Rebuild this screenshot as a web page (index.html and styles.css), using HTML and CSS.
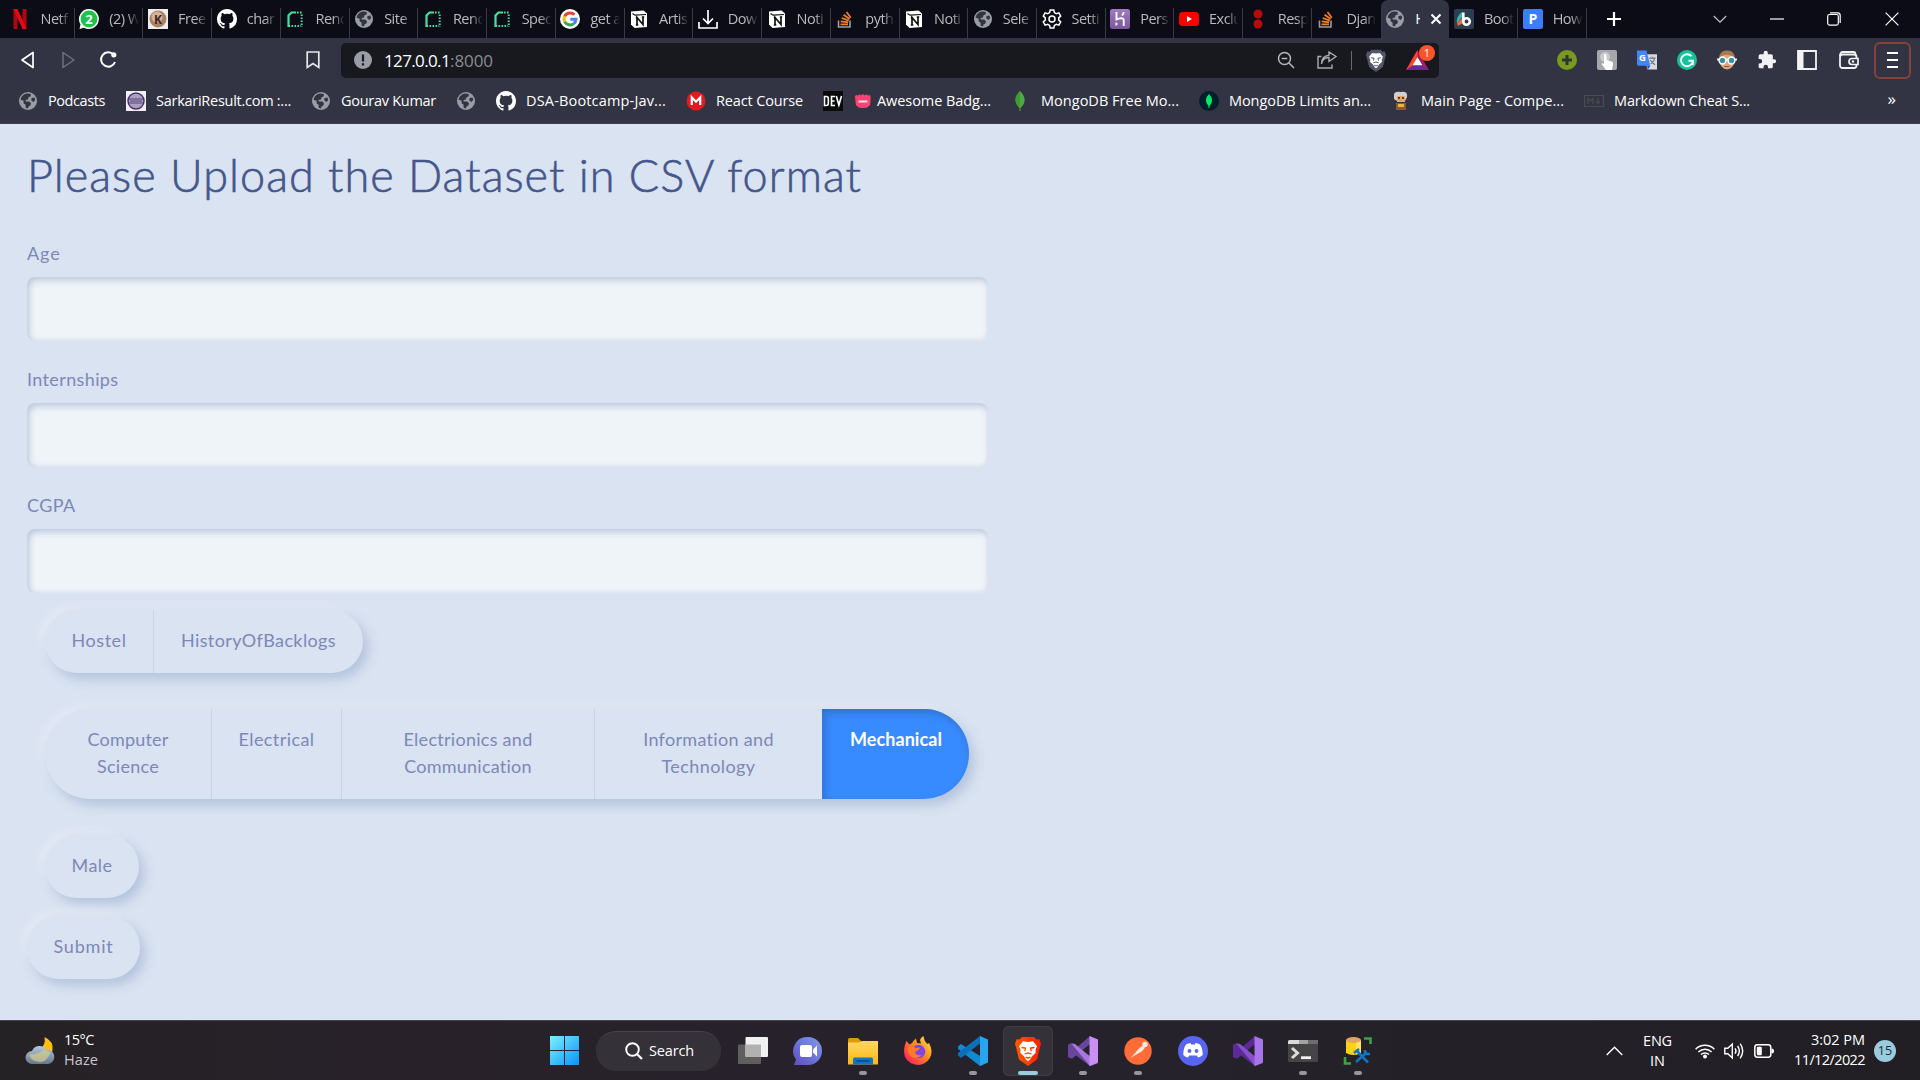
FILE: index.html
```html
<!DOCTYPE html>
<html lang="en">
<head>
<meta charset="utf-8">
<title>Home</title>
<link rel="stylesheet" href="styles.css">
</head>
<body>
<svg class="defs" width="0" height="0">
  <defs>
    <linearGradient id="gWin" x1="0" y1="0" x2="1" y2="1"><stop offset="0" stop-color="#7df0ff"/><stop offset="1" stop-color="#0a93f7"/></linearGradient>
    <linearGradient id="gChat" x1="1" y1="0" x2="0" y2="1"><stop offset="0" stop-color="#7f9be8"/><stop offset="1" stop-color="#5b4fc4"/></linearGradient>
    <linearGradient id="gFold" x1="0" y1="0" x2="0" y2="1"><stop offset="0" stop-color="#ffd664"/><stop offset="1" stop-color="#fbb912"/></linearGradient>
    <linearGradient id="gFox" x1="1" y1="0" x2="0" y2="1"><stop offset="0" stop-color="#fff044"/><stop offset=".45" stop-color="#ff8a1e"/><stop offset=".85" stop-color="#ff2a55"/><stop offset="1" stop-color="#e0187c"/></linearGradient>
    <linearGradient id="gBrave" x1="0" y1="0" x2="1" y2="0"><stop offset="0" stop-color="#ff5a00"/><stop offset="1" stop-color="#ff2000"/></linearGradient>
    <linearGradient id="gHaze" x1="0" y1="0" x2="0" y2="1"><stop offset="0" stop-color="#b4c7dc"/><stop offset="1" stop-color="#66798e"/></linearGradient>
    <linearGradient id="gHer" x1="0" y1="0" x2="0" y2="1"><stop offset="0" stop-color="#a379c0"/><stop offset="1" stop-color="#79589f"/></linearGradient>
  </defs>
  <symbol id="globe" viewBox="0 0 20 20"><circle cx="10" cy="10" r="9" fill="#9a9da7"/><path d="M9 2.6c1.700 0 3.200.3 4 .9L12.500 5.500 10.500 6.200 10 8.500 7.500 9 7.800 10.500h3.400L13 12.200 12.400 14.500 10.500 15.500 10 17.500 7.600 16.800V13.800L5.600 12.200V9.800L2.600 8.800C3.200 5.500 5.800 2.800 9 2.600z" fill="#32343f"/><path d="M13.500 7l3-.5.7 2.500-1.700 2-2.200-1.500z" fill="#32343f"/></symbol>
  <symbol id="github" viewBox="0 0 16 16"><path fill="#fff" d="M8 0C3.580 0 0 3.580 0 8c0 3.540 2.290 6.530 5.470 7.590.4.070.55-.17.55-.38 0-.19-.01-.82-.01-1.490-2.010.37-2.530-.49-2.690-.94-.09-.23-.48-.94-.82-1.130-.28-.15-.68-.52-.01-.53.63-.01 1.080.58 1.230.82.72 1.210 1.870.87 2.330.66.070-.52.28-.87.51-1.070-1.780-.2-3.640-.89-3.640-3.950 0-.87.31-1.590.82-2.150-.08-.2-.36-1.020.08-2.120 0 0 .67-.21 2.200.82A7.600 7.600 0 0 1 8 3.860c.68 0 1.360.09 2 .27 1.530-1.040 2.200-.82 2.200-.82.44 1.100.16 1.920.08 2.120.51.56.82 1.270.82 2.150 0 3.070-1.870 3.750-3.650 3.950.29.25.54.73.54 1.480 0 1.070-.01 1.930-.01 2.200 0 .21.15.46.55.38A8 8 0 0 0 16 8c0-4.420-3.580-8-8-8z"/></symbol>
  <symbol id="render" viewBox="0 0 20 20"><path d="M3.500 18V6.500l3-3H11" fill="none" stroke="#45e0a6" stroke-width="2.200"/><path d="M12 3.500h6M16.700 5.500V18M3.500 16.900H16" fill="none" stroke="#45e0a6" stroke-width="2" stroke-dasharray="1.600 1.400"/></symbol>
  <symbol id="notion" viewBox="0 0 20 20"><path d="M2 2.500L14.500 1.500 18 4.500V18L5.500 19 2 15.500z" fill="#fff"/><path d="M3.500 4.500L6 6.200 17 5.500" fill="none" stroke="#111" stroke-width="1.200"/><path d="M8 16V8.500L14 15.500V8M6.800 8.600H9M12.800 8H15.200M6.800 16H9.300" fill="none" stroke="#111" stroke-width="1.700"/></symbol>
  <symbol id="so" viewBox="0 0 20 20"><path d="M3.500 11.500V18H15V11.500" fill="none" stroke="#9a9da5" stroke-width="1.600"/><path d="M5.500 15.300H13M5.700 12.300l7.400 1M6.700 9l7 2.600M8.600 5.800l6 4.200M11.500 3l4.300 5.700" stroke="#f48024" stroke-width="1.700"/></symbol>
  <symbol id="vs" viewBox="0 0 30 30"><path d="M0 8.800L3 7.200 22 23V30L3.500 16 4 19 0 21.200z" fill="var(--a)"/><path d="M0 21.200L4 22.800 22 8V0L4 15.500 0 8.800z" fill="var(--a)"/><path d="M3 7.200L7 8 30 27 22 30z" fill="var(--b)"/><path d="M21.500 0L30 3.500V26.500L21.500 30z" fill="var(--c)"/></symbol>
  <symbol id="shield" viewBox="0 0 26 30"><path d="M7 1h12l2.500 2.500 3-.3L26 8l-1 3-3 12.500-9 6.500-9-6.500L1 11 0 8l1.500-4.800 3 .3z" fill="var(--s)"/><path d="M13 6l5-.8 4 5-1.500 3.800.2 3-3.700 3.200-1.800 3L13 25.500l-2.200-2.300L9 20.200 5.300 17l.2-3L4 10.200l4-5z" fill="#fff"/><path d="M6.500 11.500l4 .6-.8 3M19.500 11.500l-4 .6.800 3M9.500 18l3.500-1 3.500 1M10.500 21l2.500 1.200 2.500-1.200" stroke="var(--s)" stroke-width="1.300" fill="none"/></symbol>
</svg>

<header class="browser">
  <div class="tabs">
    <div class="tab"><svg class="ic" viewBox="0 0 20 20"><path d="M4.500 0v20M13.500 0v20" stroke="#b1060f" stroke-width="4"/><path d="M2.500 0H6.500L15.500 20H11.500z" fill="#e50914"/></svg><span class="t">Netf</span></div>
    <div class="tab"><svg class="ic" viewBox="0 0 20 20"><path d="M10 0a10 10 0 1 1-5 18.700L.5 20 1.500 15.300A10 10 0 0 1 10 0z" fill="#f4fff4"/><circle cx="10" cy="10" r="8.400" fill="#20c24e"/><text x="10" y="14.500" class="icotext" font-size="13" fill="#fff">2</text></svg><span class="t">(2) W</span></div>
    <div class="tab"><svg class="ic" viewBox="0 0 20 20"><path d="M0 0h20v20H0z" fill="#eee"/><circle cx="10" cy="10" r="8.500" fill="#ad8264"/><circle cx="9" cy="8" r="5.500" fill="#d3b49b"/><text x="10" y="14.500" class="icotext" font-size="12" fill="#3a2720">K</text></svg><span class="t">Free</span></div>
    <div class="tab"><svg class="ic"><use href="#github"/></svg><span class="t">char</span></div>
    <div class="tab"><svg class="ic"><use href="#render"/></svg><span class="t">Rend</span></div>
    <div class="tab"><svg class="ic"><use href="#globe"/></svg><span class="t">Site</span></div>
    <div class="tab"><svg class="ic"><use href="#render"/></svg><span class="t">Rend</span></div>
    <div class="tab"><svg class="ic"><use href="#render"/></svg><span class="t">Spec</span></div>
    <div class="tab"><svg class="ic" viewBox="0 0 20 20"><circle cx="10" cy="10" r="10" fill="#fff"/><g fill="none" stroke-width="3"><path d="M14.400 5.800A6 6 0 0 0 4.700 7.300" stroke="#ea4335"/><path d="M4.700 7.300a6 6 0 0 0 0 5.500" stroke="#fbbc05"/><path d="M4.700 12.800a6 6 0 0 0 9 1.800" stroke="#34a853"/><path d="M13.700 14.600A6 6 0 0 0 16 10.300H10.300" stroke="#4285f4"/></g></svg><span class="t">get a</span></div>
    <div class="tab"><svg class="ic"><use href="#notion"/></svg><span class="t">Artis</span></div>
    <div class="tab"><svg class="ic" viewBox="0 0 20 20"><path d="M10 1v13M5 9.500l5 5 5-5M1 13v6h18v-6" fill="none" stroke="#fff" stroke-width="1.700"/></svg><span class="t">Dow</span></div>
    <div class="tab"><svg class="ic"><use href="#notion"/></svg><span class="t">Noti</span></div>
    <div class="tab"><svg class="ic"><use href="#so"/></svg><span class="t">pyth</span></div>
    <div class="tab"><svg class="ic"><use href="#notion"/></svg><span class="t">Noti</span></div>
    <div class="tab"><svg class="ic"><use href="#globe"/></svg><span class="t">Sele</span></div>
    <div class="tab"><svg class="ic" viewBox="0 0 20 20"><path d="M8.200 1h3.600l.6 2.600 1.900 1.100 2.600-.8 1.800 3.100-2 1.900v2.200l2 1.900-1.800 3.100-2.600-.8-1.900 1.100-.6 2.600H8.200l-.6-2.600-1.900-1.100-2.600.8L1.300 13l2-1.900V8.900l-2-1.900 1.800-3.100 2.600.8 1.900-1.100z" fill="none" stroke="#fff" stroke-width="1.500"/><circle cx="10" cy="10" r="3" fill="none" stroke="#fff" stroke-width="1.500"/></svg><span class="t">Setti</span></div>
    <div class="tab"><svg class="ic" viewBox="0 0 20 20"><rect width="20" height="20" rx="2.500" fill="url(#gHer)"/><path d="M6.500 3v7.500C9 9.300 13.700 8.200 13.700 11V17M13.700 3c0 1.500-.8 2.700-1.800 3.500" fill="none" stroke="#fff" stroke-width="1.900"/><path d="M5.500 13l2.500 2-2.500 2z" fill="#fff"/></svg><span class="t">Pers</span></div>
    <div class="tab"><svg class="ic" viewBox="0 0 20 20"><rect y="3" width="20" height="14" rx="3.500" fill="#f00"/><path d="M8 7l5 3-5 3z" fill="#fff"/></svg><span class="t">Exclu</span></div>
    <div class="tab"><svg class="ic" viewBox="0 0 20 20"><circle cx="10" cy="5" r="4.500" fill="#b50d0d"/><circle cx="10" cy="15" r="4.500" fill="#b50d0d"/></svg><span class="t">Resp</span></div>
    <div class="tab no-line"><svg class="ic"><use href="#so"/></svg><span class="t">Djan</span></div>
    <div class="tab active"><svg class="ic"><use href="#globe"/></svg><span class="t">H</span><svg class="close" viewBox="0 0 12 12"><path d="M1.500 1.500l9 9M10.500 1.500l-9 9" stroke="#fff" stroke-width="2"/></svg></div>
    <div class="tab"><svg class="ic" viewBox="0 0 20 20"><rect width="20" height="20" rx="2" fill="#2b3d4f"/><path d="M8 3v5L3 14c-1-3 1-8 5-11z" fill="#35b8b0"/><path d="M3 14l5-5 1 5-5 3z" fill="#f06a35"/><circle cx="12.500" cy="12.500" r="3.300" fill="none" stroke="#fff" stroke-width="2.600"/><path d="M9.300 3.500v9" stroke="#fff" stroke-width="2.600"/></svg><span class="t">Boot</span></div>
    <div class="tab"><svg class="ic" viewBox="0 0 20 20"><rect width="20" height="20" rx="2" fill="#3b7dfb"/><text x="10" y="15.200" class="icotext" font-size="14" fill="#fff">P</text></svg><span class="t">How</span></div>
    <div class="winctl">
      <svg width="16" height="16" viewBox="0 0 16 16"><path d="M8 1v14M1 8h14" stroke="#fff" stroke-width="2.200"/></svg>
      <svg width="14" height="14" viewBox="0 0 14 14"><path d="M.8 4L7 10.200 13.200 4" fill="none" stroke="#c4c5c9" stroke-width="1.200"/></svg>
      <svg width="14" height="14" viewBox="0 0 14 14"><path d="M0 7h14" stroke="#fff" stroke-width="1.200"/></svg>
      <svg width="14" height="14" viewBox="0 0 14 14"><rect x=".7" y="2.500" width="10.600" height="10.600" rx="1.800" fill="none" stroke="#fff" stroke-width="1.200"/><path d="M3 .8h7.500a2.700 2.700 0 0 1 2.700 2.700V11" fill="none" stroke="#fff" stroke-width="1.200"/></svg>
      <svg width="14" height="14" viewBox="0 0 14 14"><path d="M.6.6l12.800 12.800M13.400.6L.6 13.400" stroke="#fff" stroke-width="1.200"/></svg>
    </div>
  </div>

  <div class="toolbar">
    <div class="nav">
      <svg width="20" height="20" viewBox="0 0 20 20"><path d="M15 2.500v15L4 10z" fill="none" stroke="#fff" stroke-width="1.700" stroke-linejoin="round"/></svg>
      <svg width="20" height="20" viewBox="0 0 20 20"><path d="M5 2.500v15L16 10z" fill="none" stroke="#6e707c" stroke-width="1.500" stroke-linejoin="round"/></svg>
      <svg width="20" height="20" viewBox="0 0 20 20"><path d="M15.500 4.500A7.200 7.200 0 1 0 17 12" fill="none" stroke="#fff" stroke-width="2"/><circle cx="15.800" cy="4.800" r="2.600" fill="#fff"/></svg>
    </div>
    <svg class="mark" width="14" height="18" viewBox="0 0 14 18"><path d="M1.200 1h11.600v15.500L7 12.500 1.200 16.500z" fill="none" stroke="#e8e8ec" stroke-width="1.700"/></svg>
    <div class="url">
      <svg width="18" height="18" viewBox="0 0 18 18"><circle cx="9" cy="9" r="9" fill="#9b9da6"/><path d="M9 3.500v7M9 12.200v2.300" stroke="#17191f" stroke-width="2.200"/></svg>
      <span class="addr"><span data-w="66">127.0.0.1</span><span class="port" data-w="43">:8000</span></span>
      <div class="urlicons">
        <svg width="18" height="18" viewBox="0 0 18 18"><circle cx="7.500" cy="7.500" r="6" fill="none" stroke="#b6b7bd" stroke-width="1.500"/><path d="M12 12l5 5M4.700 7.500h5.600" stroke="#b6b7bd" stroke-width="1.500"/></svg>
        <svg width="20" height="18" viewBox="0 0 20 18"><path d="M4.500 5.500H1V17h14v-3.500M4.500 13c.5-4 3-6.300 7.500-6.500V10.500L19 5.500 12 1v3.200C7 4.700 4.500 8 4.500 13z" fill="none" stroke="#a9abb2" stroke-width="1.400"/></svg>
        <i class="bar"></i>
        <svg class="lion" width="20" height="23"><use href="#shield"/></svg>
        <div class="bat"><svg width="23" height="20" viewBox="0 0 24 21"><path d="M12 0L0 21h24z" fill="#9e1f63"/><path d="M12 0L0 21l12-8z" fill="#ff4724"/><path d="M0 21h24L12 13z" fill="#662d91"/><path d="M12 7.500L6.800 16h10.400z" fill="#fff"/></svg><b>1</b></div>
      </div>
    </div>
    <div class="exts">
      <svg width="20" height="20" viewBox="0 0 20 20"><circle cx="10" cy="10" r="10" fill="#7a9a1e"/><path d="M10 5v10M5 10h10" stroke="#2e3436" stroke-width="3"/></svg>
      <svg width="20" height="20" viewBox="0 0 20 20"><rect width="20" height="20" rx="2" fill="#a5a7aa"/><circle cx="8" cy="7" r="5" fill="#c8cacc"/><path d="M7 4.500q1.300-1 2.500 0V10l5 1.500q2 .6 1.500 3L15 20H9l-4.500-6 1-1L7 14z" fill="#fff"/></svg>
      <svg width="20" height="20" viewBox="0 0 21 20"><path d="M7 4h14v16H11z" fill="#d9dadd"/><path d="M0 0h10l4 16H1.500Q0 16 0 14z" fill="#4285f4"/><path d="M10.500 16H14l-2.500 4z" fill="#1d4fc0"/><text x="5.800" y="11" class="icotext" font-size="10" fill="#fff">G</text><path d="M13 8h6.500M16 6.500V8M18.500 8c-.5 3-2 5-4 6M14 10c1 2 2.500 3.500 5 5" fill="none" stroke="#667a88" stroke-width="1.200"/></svg>
      <svg width="20" height="20" viewBox="0 0 20 20"><circle cx="10" cy="10" r="10" fill="#15c39a"/><path d="M14.500 6.200A6 6 0 1 0 16 10.800h-4.500M15.800 10.800V15" fill="none" stroke="#fff" stroke-width="1.900"/></svg>
      <svg width="20" height="20" viewBox="0 0 20 20"><ellipse cx="10" cy="10.500" rx="7.500" ry="9" fill="#dca77c"/><path d="M2 8Q3 0 10 .5 17 0 18 8 13 3.500 7 5z" fill="#a77a4c"/><path d="M0 9.500h20" stroke="#eee" stroke-width="2"/><circle cx="5.500" cy="10.500" r="3.400" fill="#3b8fa8" stroke="#fff" stroke-width="1.500"/><circle cx="14.500" cy="10.500" r="3.400" fill="#3b8fa8" stroke="#fff" stroke-width="1.500"/><path d="M7.500 16.500h5" stroke="#9c4c3a"/></svg>
      <svg width="20" height="20" viewBox="0 0 24 24"><path fill="#f2f2f4" d="M20.500 11H19V7a2 2 0 0 0-2-2h-4V3.500a2.500 2.500 0 0 0-5 0V5H4a2 2 0 0 0-2 2v3.800h1.500a2.700 2.700 0 0 1 0 5.400H2V20a2 2 0 0 0 2 2h3.800v-1.500a2.700 2.700 0 0 1 5.400 0V22H17a2 2 0 0 0 2-2v-4h1.500a2.500 2.500 0 0 0 0-5z"/></svg>
      <svg width="20" height="20" viewBox="0 0 20 20"><path d="M1 1h18v18H1z" fill="none" stroke="#f2f2f4" stroke-width="1.800"/><path d="M1 1h5.500v18H1z" fill="#f2f2f4"/></svg>
      <svg class="wallet" width="20" height="18" viewBox="0 0 20 18"><rect x="1" y="3.500" width="16.500" height="13.500" rx="2.500" fill="none" stroke="#f2f2f4" stroke-width="1.800"/><path d="M1 5Q1 1 4 1h10.500q2 0 2 2.500" fill="none" stroke="#f2f2f4" stroke-width="1.800"/><path d="M19 7.500h-6a3 3 0 0 0 0 6h6z" fill="#323443" stroke="#f2f2f4" stroke-width="1.700"/><circle cx="14" cy="10.500" r="1.200" fill="#f2f2f4"/></svg>
    </div>
    <div class="menu"><i></i><i></i><i></i></div>
  </div>

  <nav class="bookmarks">
    <a style="width:108px"><svg class="ic"><use href="#globe"/></svg><span data-w="57">Podcasts</span></a>
    <a style="width:185px"><svg class="ic" viewBox="0 0 20 20"><path d="M0 0h20v20H0z" fill="#f3eff4"/><circle cx="10" cy="10" r="8" fill="#aaa0c0" stroke="#48356e" stroke-width="1.500"/><path d="M3 8h14M3 12h14M4 10h12" stroke="#5a4180" stroke-width="1.200"/></svg><span data-w="135">SarkariResult.com :...</span></a>
    <a style="width:145px"><svg class="ic"><use href="#globe"/></svg><span data-w="95">Gourav Kumar</span></a>
    <a style="width:40px"><svg class="ic"><use href="#globe"/></svg></a>
    <a style="width:190px"><svg class="ic"><use href="#github"/></svg><span data-w="140">DSA-Bootcamp-Jav...</span></a>
    <a style="width:137px"><svg class="ic" viewBox="0 0 20 20"><circle cx="10" cy="10" r="9.500" fill="#e31a1f"/><path d="M5.800 14V6.500l4.200 4.200 4.200-4.200V14" fill="none" stroke="#fff" stroke-width="2.200"/></svg><span data-w="87">React Course</span></a>
    <a style="width:30px"><svg class="ic" viewBox="0 0 20 20"><path d="M0 0h20v20H0z" fill="#0a0a0a"/><path d="M1.500 5.500h1.800q2 0 2 2v5q0 2-2 2H1.500zM12 5.500H8.500v9H12M8.500 10h3M13.300 5l2.600 9 2.600-9" fill="none" stroke="#fff" stroke-width="1.600"/></svg></a>
    <a class="tight" style="width:157px"><svg class="ic" viewBox="0 0 20 20"><path d="M2 5q2-2 3 0 1-2.500 3-.5 2-2.500 3.500 0Q14 2.500 15 5q1.500-2 2.500.5V11q0 6-7.500 6T2.500 11z" fill="#ff4274"/><path d="M5.500 9.500h9v2h-9z" fill="#ffe3ea"/></svg><span data-w="114">Awesome Badg...</span></a>
    <a style="width:189px"><svg class="ic" viewBox="0 0 20 20"><path d="M10 0q9 9 .5 17V20h-1V17Q1 9 10 0z" fill="#4faa41"/><path d="M10 0v17Q1 9 10 0z" fill="#3f9a38"/></svg><span class="nudge" data-w="138">MongoDB Free Mo...</span></a>
    <a style="width:192px"><svg class="ic" viewBox="0 0 20 20"><circle cx="10" cy="10" r="10" fill="#001e2b"/><path d="M10 3q6 6 .5 12v2h-1v-2Q4 9 10 3z" fill="#00ed64"/></svg><span data-w="142">MongoDB Limits an...</span></a>
    <a style="width:193px"><svg class="ic" viewBox="0 0 20 20"><path d="M3 4Q3 0 10 1q7-1 6 5l-2 4H6L3 8z" fill="#cfd0ca"/><path d="M6 5h8v6H6z" fill="#e3a56d"/><path d="M5 12h10v7H5z" fill="#8c5a2d"/><path d="M7 7h2M11 7h2" stroke="#222" stroke-width="1.500"/><path d="M7 13h6v3H7z" fill="#e8b54a"/></svg><span data-w="143">Main Page - Compe...</span></a>
    <a><svg class="ic" viewBox="0 0 20 20"><path d="M.5 4.500h19v11H.5zM4 13V7.500L6.500 10 9 7.500V13M14 7v5M12 10.500l2 2 2-2" fill="none" stroke="#4b4c52" stroke-width="1.200"/></svg><span data-w="136">Markdown Cheat S...</span></a>
    <span class="more">»</span>
  </nav>
</header>

<main class="page">
  <h1><span data-w="835">Please Upload the Dataset in CSV format</span></h1>
  <form>
    <label><span data-w="33.500">Age</span></label><input type="text">
    <label><span data-w="91.500">Internships</span></label><input type="text">
    <label><span data-w="48.500">CGPA</span></label><input type="text">
    <div class="group g1">
      <div class="opt"><span data-w="55">Hostel</span></div>
      <div class="opt"><span data-w="155">HistoryOfBacklogs</span></div>
    </div>
    <div class="group g2">
      <div class="opt"><span data-w="81">Computer</span><br><span data-w="62">Science</span></div>
      <div class="opt"><span data-w="76">Electrical</span></div>
      <div class="opt"><span data-w="129">Electrionics and</span><br><span data-w="128">Communication</span></div>
      <div class="opt"><span data-w="131">Information and</span><br><span data-w="94">Technology</span></div>
      <div class="opt on"><span data-w="92">Mechanical</span></div>
    </div>
    <div class="group g3"><div class="opt"><span data-w="41">Male</span></div></div>
    <div class="group submit"><div class="opt"><span data-w="60">Submit</span></div></div>
  </form>
</main>

<footer class="taskbar">
  <div class="weather">
    <svg width="30" height="28" viewBox="0 0 30 28"><path d="M19.500 0Q29 4 27.500 14 22 20 15 12 21 8 19.500 0z" fill="#fcbd14"/><path d="M7 27a6.500 6.500 0 0 1 0-13 8 8 0 0 1 14-1.500A7.300 7.300 0 1 1 23 27z" fill="url(#gHaze)"/><path d="M4 17.500Q13 18 20 12l5 4Q22 24.500 15 25 6 24.500 4 17.500z" fill="#d3ca92" opacity=".75"/></svg>
    <div class="up"><p data-w="30">15°C</p><p class="dim" data-w="34">Haze</p></div>
  </div>
  <div class="dock">
    <svg class="win" width="29" height="29" viewBox="0 0 29 29"><path d="M0 0h14v14H0zM15 0h14v14H15zM0 15h14v14H0zM15 15h14v14H15z" fill="url(#gWin)"/></svg>
    <div class="search"><svg width="18" height="18" viewBox="0 0 18 18"><circle cx="7.500" cy="7.500" r="6.300" fill="none" stroke="#fff" stroke-width="1.900"/><path d="M12 12l5 5" stroke="#fff" stroke-width="2.200"/></svg><span data-w="45">Search</span></div>
    <div class="app"><svg viewBox="0 0 30 30"><rect y="8.500" width="23" height="19.500" rx="1" fill="#5f5f5f"/><rect x="7.500" y="1" width="22.500" height="20" rx="1" fill="#f1f1f1"/><path d="M7.500 8.500H23V21H7.500z" fill="#b1b1b1"/></svg></div>
    <div class="app"><svg viewBox="0 0 30 30"><path d="M15 1a14 14 0 1 1 0 28H1l2-5.500A14 14 0 0 1 15 1z" fill="url(#gChat)"/><rect x="7" y="9" width="12" height="12" rx="2" fill="#fff"/><path d="M20 13.500l4-4v11l-4-4z" fill="#fff"/></svg></div>
    <div class="app run"><svg viewBox="0 0 30 30"><path d="M0 3.500Q0 2 1.500 2H10l3 3V12H0z" fill="#e09a07"/><path d="M0 6.500h11l3-1.500h16V28.500H0z" fill="url(#gFold)"/><path d="M5 28.500V23q0-1.500 1.500-1.500h17q1.500 0 1.500 1.500v5.500z" fill="#1274c8"/><path d="M8.500 25h13" stroke="#064b8f" stroke-width="1.600"/></svg></div>
    <div class="app"><svg viewBox="0 0 30 30"><path d="M3.500 5l3 3.500L9 7q1.500-3 4-4.500L14 7l4 .5L17 4q1-3 3.500-4Q21 5 24.500 8l1.500-1q5 9 .5 15.500Q22 29 15 29 6 28.500 2 21-.5 13 3.500 5z" fill="url(#gFox)"/><circle cx="15.500" cy="15.500" r="6.800" fill="#8047df"/><path d="M5 11q5-2 8 1l4-.5q-1 3-5 4 1 5 7 3.500-5 5-11 1.500Q4 17 5 11z" fill="#ff7b27"/></svg></div>
    <div class="app run"><svg viewBox="0 0 30 30"><path d="M0 10.500L3 8 30 25 22 30 0 13z" fill="#1389d1"/><path d="M0 19.500L3 22 24 6 22 0 0 17z" fill="#0b70b7"/><path d="M22 0l8 3.500v23L22 30z" fill="#27a5ee"/></svg></div>
    <div class="app run current"><svg class="braveapp" viewBox="0 0 30 30"><use href="#shield"/></svg></div>
    <div class="app run"><svg class="v1"><use href="#vs"/></svg></div>
    <div class="app run"><svg viewBox="0 0 30 30"><circle cx="15" cy="15" r="13.700" fill="#ff6c37"/><path d="M7.500 22l9-10q3-3 5.500-1.500-1 4-6 6.500z" fill="#ffe9df"/><circle cx="22" cy="8.500" r="2.700" fill="#ffe9df"/></svg></div>
    <div class="app"><svg viewBox="0 0 30 30"><circle cx="15" cy="15" r="15" fill="#5865f2"/><path d="M8 8.500q2.500-1.200 4.500-1.500l.7 1.400h3.600L17.500 7q2.500.3 4.500 1.500 3 4.500 2.700 10.500-2.500 2-4.700 2.500l-1.200-2h-7.600l-1.200 2Q7.500 21 5.300 19 5 13 8 8.500z" fill="#fff"/><ellipse cx="11.500" cy="15" rx="1.900" ry="2.100" fill="#5865f2"/><ellipse cx="18.500" cy="15" rx="1.900" ry="2.100" fill="#5865f2"/></svg></div>
    <div class="app"><svg class="v2"><use href="#vs"/></svg></div>
    <div class="app run"><svg viewBox="0 0 30 30"><rect y="4" width="30" height="22" rx="1.500" fill="#454545"/><path d="M0 5.500Q0 4 1.500 4H11v4H0z" fill="#dcdcdc"/><path d="M11 4h9v4h-9z" fill="#a3a3a3"/><path d="M20 4h10v4H20z" fill="#6d6d6d"/><path d="M4 12l5.500 5L4 22" fill="none" stroke="#ddd" stroke-width="3"/><path d="M13 21.700h10" stroke="#f2f2f2" stroke-width="2.800"/></svg></div>
    <div class="app run"><svg viewBox="0 0 30 30"><path d="M3 4v13q7 4 15 0V4z" fill="#fcd116"/><path d="M13 4h5v13l-5 1.500z" fill="#ffe45c"/><ellipse cx="10.500" cy="4" rx="7.500" ry="3" fill="#e3a45f"/><path d="M21 2.500h6.500V8M2 21v6.500h6" fill="none" stroke="#3fa344" stroke-width="2.600"/><path d="M13 26L24 16M14 15l11 11.500M11 17l5-4M22 14v4h5" fill="none" stroke="#1173c4" stroke-width="2.600"/></svg></div>
  </div>
  <div class="tray">
    <svg width="17" height="10" viewBox="0 0 17 10"><path d="M.7 9l7.800-7.800L16.300 9" fill="none" stroke="#fff" stroke-width="1.400"/></svg>
    <div class="lang"><p data-w="29">ENG</p><p data-w="15">IN</p></div>
    <svg width="20" height="16" viewBox="0 0 20 16"><g fill="none" stroke="#fff" stroke-width="1.500"><path d="M.6 6.200a13.300 13.300 0 0 1 18.800 0M3.400 9a9.300 9.300 0 0 1 13.200 0M6 11.600a5.600 5.600 0 0 1 8 0"/></g><circle cx="10" cy="13.500" r="2" fill="#fff"/></svg>
    <svg width="20" height="18" viewBox="0 0 20 18"><g fill="none" stroke="#fff" stroke-width="1.400"><path d="M.8 6.200h3L8.300 2v14L3.800 11.800h-3z"/><path d="M11 6.300q2 2.700 0 5.400M13.600 4q3.500 5 0 10M16.200 1.700q5 7.300 0 14.600"/></g></svg>
    <svg width="20" height="14" viewBox="0 0 20 14"><rect x=".8" y=".8" width="16" height="12.400" rx="2.600" fill="none" stroke="#fff" stroke-width="1.500"/><path d="M17.500 4.500q2.500 0 2.500 2.500t-2.500 2.500z" fill="#fff"/><rect x="2.800" y="2.800" width="5" height="8.400" rx="1" fill="#fff"/></svg>
    <div class="clock up"><p data-w="54">3:02 PM</p><p data-w="71">11/12/2022</p></div>
    <span class="count">15</span>
  </div>
</footer>
<script src="fit.js"></script>
</body>
</html>
```
FILE: styles.css
```css
* { box-sizing: border-box; }
body { margin: 0; width: 1920px; height: 1080px; overflow: hidden; display: flex; flex-direction: column; font-family: "Open Sans", "Noto Sans", sans-serif; font-size: 14.5px; background: #d9e3f1; }
p { margin: 0; }
svg { display: block; flex: none; overflow: visible; }
.defs { position: absolute; }
[data-w] { white-space: nowrap; }
p[data-w] { width: max-content; }
.icotext { font-family: "Open Sans", sans-serif; font-weight: 700; text-anchor: middle; }
.ic { width: 20px; height: 20px; }

.browser { height: 124px; flex: none; background: #323443; color: #fff; border-bottom: 1px solid #3c3f4f; }
.tabs { height: 38px; display: flex; background: #0b0c16; padding-left: 6px; }
.tab { width: 68.740px; flex: none; display: flex; align-items: center; padding-left: 4.500px; gap: 10px; border-right: 1px solid #38383c; border-image: linear-gradient(to bottom, transparent 9px, #3b3b3e 9px) 1; color: #b9babe; }
.tab .t { width: 30px; overflow: hidden; white-space: nowrap; letter-spacing: -.5px; padding-bottom: 1px; -webkit-mask-image: linear-gradient(to right, #000 18px, transparent 30px); mask-image: linear-gradient(to right, #000 18px, transparent 30px); }
.no-line { border-image: none; border-color: transparent; }
.tab.active { background: #323443; border-image: none; border-color: transparent; border-radius: 7px 7px 0 0; color: #fff; }
.tab.active .t { width: 5px; -webkit-mask-image: none; mask-image: none; }
.close { width: 12px; height: 12px; }
.winctl { flex: 1; display: flex; align-items: center; padding-left: 19px; }
.winctl svg:nth-child(2) { margin-left: 91px; }
.winctl svg:nth-child(3) { margin-left: 43px; }
.winctl svg:nth-child(4) { margin-left: 43px; }
.winctl svg:nth-child(5) { margin-left: 44px; }

.toolbar { height: 44px; display: flex; align-items: center; padding-left: 18px; }
.nav { display: flex; gap: 20px; width: 288px; }
.mark { margin-right: 21px; }
.url { width: 1098px; height: 35px; display: flex; align-items: center; background: #17191f; border-radius: 5px; padding: 0 10px 0 13px; }
.addr { margin-left: 12px; font-size: 17px; color: #fff; }
.port { color: #8a8c91; }
.urlicons { margin-left: auto; display: flex; align-items: center; }
.urlicons > svg:nth-child(2) { margin-left: 22px; }
.bar { width: 1px; height: 19px; background: #696b70; margin: 0 14px; }
.lion { --s: #53566b; }
.bat { position: relative; margin-left: 20px; }
.bat b { position: absolute; left: 13px; top: -5px; width: 16px; height: 16px; border-radius: 8px; background: #fb542b; font-size: 11px; line-height: 16px; text-align: center; font-weight: 400; }
.exts { display: flex; gap: 20px; margin-left: 118px; align-items: center; width: 303px; }
.wallet { margin-left: 2px; }
.menu { margin-left: 14px; width: 37px; height: 37px; border: 2px solid #864138; border-radius: 6px; display: flex; flex-direction: column; align-items: center; justify-content: center; gap: 5px; }
.menu i { width: 11px; height: 2px; background: #fff; }

.bookmarks { height: 38px; display: flex; align-items: center; padding-left: 18px; }
.bookmarks a { display: flex; align-items: center; gap: 10px; flex: none; }
.bookmarks a span { padding-bottom: 2px; }
.bookmarks a.tight { gap: 4px; }
.bookmarks .nudge { margin-left: 1px; }
.more { margin: 0 24px 5px auto; font-size: 17px; }

.page { flex: 1; padding: 25px 27px 0; font-family: Lato, sans-serif; color: #7c88b8; font-size: 18px; line-height: 27px; }
.page h1 { margin: 0 0 27px; font-size: 45px; line-height: 53px; padding-bottom: 1px; font-weight: 300; -webkit-text-stroke: .6px #44568a; color: #44568a; white-space: nowrap; }
form { width: 961px; display: flex; flex-direction: column; align-items: flex-start; }
label { height: 27px; margin: 10px 0; }
input { width: 961px; height: 64px; margin: 0 0 15px; border: 0; border-radius: 8px; background: #eff4f9; box-shadow: inset 2px 3px 7px #b9c6da, inset -1px -2px 4px #e6eaf2; }
.group { display: flex; margin-left: 18px; border-radius: 45px; background: #d9e3f1; box-shadow: 5px 6px 12px #b3c3dd, -5px -5px 9px #e4e9f4; }
.opt { padding: 17px 0 18px; text-align: center; border-left: 1px solid #c8d4e4; }
.opt:first-child { border-left: 0; }
.g1 { margin-top: 2px; height: 63px; }
.g1 .opt:nth-child(1) { width: 108px; }
.g1 .opt:nth-child(2) { width: 210px; }
.g2 { margin-top: 36px; height: 90px; }
.g2 .opt:nth-child(1) { width: 166px; }
.g2 .opt:nth-child(2) { width: 130px; }
.g2 .opt:nth-child(3) { width: 253px; }
.g2 .opt:nth-child(4) { width: 228px; }
.g2 .opt:nth-child(5) { width: 147px; }
.opt.on { color: #fff; font-weight: 700; border-left: 0; padding-left: 1px; background: #388bff; border-radius: 0 45px 45px 0; box-shadow: inset 3px 4px 8px #2f73cf; }
.g3 { margin-top: 36px; width: 94px; height: 63px; }
.submit { margin: 18px 0 0; width: 113px; height: 63px; }
.g3 .opt, .submit .opt { width: 100%; }

.taskbar { height: 60px; flex: none; background: linear-gradient(to right, #252225, #28212a 20%, #25222b 60%, #211f24); border-top: 1px solid #46464c; display: flex; align-items: center; color: #fff; line-height: 20px; }
.weather { width: 550px; display: flex; gap: 9px; align-items: center; padding-left: 25px; }
.up { padding-bottom: 2px; }
.dim { color: #c9c7cb; }
.dock { display: flex; align-items: center; height: 59px; width: 1056px; }
.search { width: 125px; height: 40px; margin: 0 7px 0 17px; border-radius: 20px; background: #353138; border-top: 1px solid #48434b; display: flex; align-items: center; gap: 6px; padding-left: 29px; }
.app { position: relative; width: 50px; height: 50px; margin-right: 5px; flex: none; display: grid; place-items: center; border-radius: 6px; }
.app svg { width: 30px; height: 30px; }
.app.run::after { content: ""; position: absolute; left: 21px; bottom: 1px; width: 8px; height: 4px; border-radius: 2px; background: #98969b; }
.app.current { background: #353138; box-shadow: inset 0 0 0 1px #413d44; }
.app.current::after { left: 15px; width: 20px; background: #9accdf; }
.braveapp { --s: url(#gBrave); }
.v1 { --a: #68469d; --b: #a678de; --c: #c98ff5; }
.v2 { --a: #5a2a96; --b: #8a4fcb; --c: #a974ea; }
.tray { flex: 1; display: flex; align-items: center; }
.lang { width: 35px; margin: 0 20px 0 17px; display: flex; flex-direction: column; align-items: center; }
.tray > svg:nth-child(4) { margin-left: 9px; }
.tray > svg:nth-child(5) { margin-left: 10px; }
.clock { width: 91px; display: flex; flex-direction: column; align-items: flex-end; }
.count { margin-left: 9px; width: 22px; height: 22px; border-radius: 11px; background: #9accdf; color: #1b2a33; font-size: 12.500px; line-height: 22px; text-align: center; }
```
FILE: fit.js
```js
// Adjusts tracking so that each label takes the width set in its data-w attribute.
document.querySelectorAll("[data-w]").forEach(function (el) {
  var gap = Number(el.dataset.w) - el.getBoundingClientRect().width;
  el.style.letterSpacing = (gap / el.textContent.length).toFixed(3) + "px";
});
```
